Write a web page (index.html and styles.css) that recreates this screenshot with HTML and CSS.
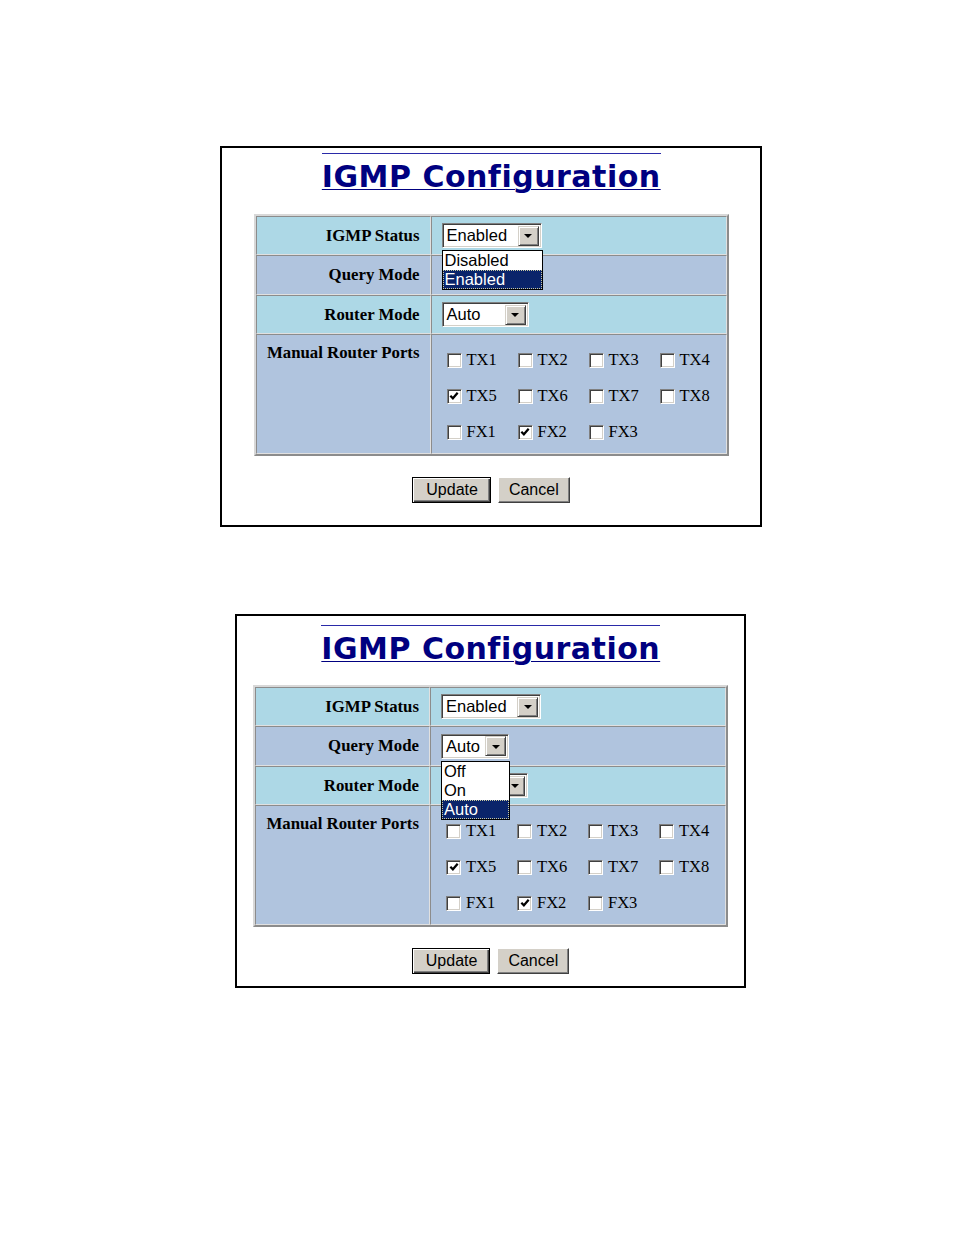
FILE: index.html
```html
<!DOCTYPE html>
<html>
<head>
<meta charset="utf-8">
<link rel="stylesheet" href="styles.css">
</head>
<body>
<div class="page">
  <section class="frame f1">
    <h1 class="title"><a>IGMP Configuration</a></h1>
    <div class="cfg">
      <div class="lab r1">IGMP Status</div>
      <div class="val r1">
        <div class="sel w100"><span class="txt">Enabled</span><span class="arr"><i></i></span>
          <div class="list w101"><div class="it">Disabled</div><div class="it on">Enabled</div></div>
        </div>
      </div>
      <div class="lab r2">Query Mode</div>
      <div class="val r2"></div>
      <div class="lab r3">Router Mode</div>
      <div class="val r3">
        <div class="sel w87"><span class="txt">Auto</span><span class="arr"><i></i></span></div>
      </div>
      <div class="lab r4 top">Manual Router Ports</div>
      <div class="val r4 ports">
        <div class="port"><span class="cb"></span>TX1</div>
        <div class="port"><span class="cb"></span>TX2</div>
        <div class="port"><span class="cb"></span>TX3</div>
        <div class="port"><span class="cb"></span>TX4</div>
        <div class="port"><span class="cb on"><svg viewBox="0 0 9 9"><path d="M1.2 4.2 L3.5 6.6 L7.8 1.6" /></svg></span>TX5</div>
        <div class="port"><span class="cb"></span>TX6</div>
        <div class="port"><span class="cb"></span>TX7</div>
        <div class="port"><span class="cb"></span>TX8</div>
        <div class="port"><span class="cb"></span>FX1</div>
        <div class="port"><span class="cb on"><svg viewBox="0 0 9 9"><path d="M1.2 4.2 L3.5 6.6 L7.8 1.6" /></svg></span>FX2</div>
        <div class="port"><span class="cb"></span>FX3</div>
      </div>
    </div>
    <div class="buttons"><span class="btn def">Update</span><span class="btn">Cancel</span></div>
  </section>

  <section class="frame f2">
    <h1 class="title"><a>IGMP Configuration</a></h1>
    <div class="cfg">
      <div class="lab r1">IGMP Status</div>
      <div class="val r1">
        <div class="sel w100"><span class="txt">Enabled</span><span class="arr"><i></i></span></div>
      </div>
      <div class="lab r2">Query Mode</div>
      <div class="val r2">
        <div class="sel w68"><span class="txt">Auto</span><span class="arr"><i></i></span>
          <div class="list w69"><div class="it">Off</div><div class="it">On</div><div class="it on">Auto</div></div>
        </div>
      </div>
      <div class="lab r3">Router Mode</div>
      <div class="val r3">
        <div class="sel w87"><span class="txt">Auto</span><span class="arr"><i></i></span></div>
      </div>
      <div class="lab r4 top">Manual Router Ports</div>
      <div class="val r4 ports">
        <div class="port"><span class="cb"></span>TX1</div>
        <div class="port"><span class="cb"></span>TX2</div>
        <div class="port"><span class="cb"></span>TX3</div>
        <div class="port"><span class="cb"></span>TX4</div>
        <div class="port"><span class="cb on"><svg viewBox="0 0 9 9"><path d="M1.2 4.2 L3.5 6.6 L7.8 1.6" /></svg></span>TX5</div>
        <div class="port"><span class="cb"></span>TX6</div>
        <div class="port"><span class="cb"></span>TX7</div>
        <div class="port"><span class="cb"></span>TX8</div>
        <div class="port"><span class="cb"></span>FX1</div>
        <div class="port"><span class="cb on"><svg viewBox="0 0 9 9"><path d="M1.2 4.2 L3.5 6.6 L7.8 1.6" /></svg></span>FX2</div>
        <div class="port"><span class="cb"></span>FX3</div>
      </div>
    </div>
    <div class="buttons"><span class="btn def">Update</span><span class="btn">Cancel</span></div>
  </section>
</div>
</body>
</html>
```

FILE: styles.css
```css
html, body {
  margin: 0;
  padding: 0;
  background: #fff;
}
.page {
  padding-top: 146px;
  width: 954px;
  height: 1235px;
  box-sizing: border-box;
}
.frame {
  box-sizing: border-box;
  border: 2px solid #000;
  display: flex;
  flex-direction: column;
  align-items: center;
}
.f1 {
  margin-left: 220px;
  width: 542px;
  height: 381px;
  padding-top: 5px;
}
.f2 {
  margin-top: 87px;
  margin-left: 235px;
  width: 511px;
  height: 374px;
  padding-top: 9px;
}
.title {
  margin: 0;
  display: flex;
  font-family: "DejaVu Sans", Verdana, sans-serif;
  font-weight: bold;
  font-size: 30px;
  line-height: 30px;
  letter-spacing: 0.5px;
  color: #000080;
}
.title a {
  display: block;
  border-top: 1px solid #2a2aa8;
  padding-top: 8px;
  height: 29px;
  text-decoration: underline;
  text-decoration-thickness: 1px;
  text-underline-offset: 2px;
  color: #000080;
  margin-right: -0.5px;
}
.cfg {
  margin-top: 23px;
  box-sizing: border-box;
  width: 475px;
  display: grid;
  grid-template-columns: 175px 296px;
  grid-template-rows: 39px 40px 39px 120px;
  border: 2px solid;
  border-color: #d8d8d8 #8c8c8c #8c8c8c #d8d8d8;
}
.f2 .cfg {
  margin-top: 22px;
}
.lab, .val {
  box-sizing: border-box;
  border: 1px solid;
  border-color: #8c8c8c #e0e0e0 #e0e0e0 #8c8c8c;
  font-family: "Liberation Serif", "Times New Roman", serif;
  font-size: 16.5px;
  color: #000;
}
.lab {
  font-weight: bold;
  font-size: 16.8px;
  display: flex;
  align-items: center;
  justify-content: flex-end;
  padding-right: 10px;
}
.lab.top {
  align-items: flex-start;
  padding-top: 8px;
}
.val {
  display: flex;
  align-items: center;
  padding-left: 10px;
}
.r1, .r3 { background: #add8e6; }
.r2, .r4 { background: #b0c4de; }

.sel {
  position: relative;
  box-sizing: border-box;
  height: 25px;
  display: flex;
  align-items: center;
  background: #fff;
  border: 1px solid;
  border-color: #808080 #fff #fff #808080;
  box-shadow: inset 1px 1px 0 #404040, inset -1px -1px 0 #d4d0c8;
  padding: 1px 2px 1px 1px;
}
.w100 { width: 100px; }
.w87 { width: 87px; }
.w68 { width: 68px; }
.sel .txt {
  flex: 1;
  font-family: "Liberation Sans", Arial, sans-serif;
  font-size: 16.5px;
  line-height: 21px;
  padding-left: 3px;
  color: #000;
}
.sel .arr {
  box-sizing: border-box;
  width: 21px;
  height: 20px;
  background: #d4d0c8;
  border: 1px solid;
  border-color: #d4d0c8 #404040 #404040 #d4d0c8;
  box-shadow: inset 1px 1px 0 #fff, inset -1px -1px 0 #808080;
  display: flex;
  align-items: center;
  justify-content: center;
}
.sel .arr i {
  width: 0;
  height: 0;
  border-left: 4px solid transparent;
  border-right: 4px solid transparent;
  border-top: 4px solid #000;
  margin-top: 1px;
}
.list {
  position: absolute;
  left: -1px;
  top: calc(100% + 3px);
  box-sizing: border-box;
  background: #fff;
  border: 1px solid #000;
  z-index: 5;
}
.w101 { width: 101px; }
.w69 { width: 69px; }
.it {
  font-family: "Liberation Sans", Arial, sans-serif;
  font-size: 16.5px;
  line-height: 19px;
  height: 19px;
  padding-left: 2px;
  color: #000;
}
.it.on {
  background: #0a246a;
  color: #fff;
  outline: 1px dotted #c8c8a0;
  outline-offset: -1px;
}

.ports {
  display: grid;
  grid-template-columns: repeat(4, 71px);
  grid-auto-rows: 36px;
  align-content: start;
  align-items: center;
  padding-left: 15px;
  padding-top: 7px;
}
.port {
  display: flex;
  align-items: center;
  gap: 5px;
  line-height: 18px;
}
.cb {
  box-sizing: border-box;
  width: 15px;
  height: 15px;
  background: #fff;
  border: 1px solid;
  border-color: #808080 #fff #fff #808080;
  box-shadow: inset 1px 1px 0 #404040, inset -1px -1px 0 #d4d0c8;
  display: flex;
  align-items: center;
  justify-content: center;
}
.cb svg {
  width: 10px;
  height: 10px;
  fill: none;
  stroke: #000;
  stroke-width: 2;
}

.buttons {
  margin-top: 21px;
  display: flex;
  gap: 7px;
}
.btn {
  box-sizing: border-box;
  height: 26px;
  padding: 0 10px;
  display: flex;
  align-items: center;
  font-family: "Liberation Sans", Arial, sans-serif;
  font-size: 16px;
  color: #000;
  background: #d4d0c8;
  border: 1px solid;
  border-color: #fff #404040 #404040 #fff;
  box-shadow: inset -1px -1px 0 #808080;
}
.btn.def {
  padding: 0 12px 0 13px;
  border: 1px solid #000;
  box-shadow: inset 1px 1px 0 #fff, inset -1px -1px 0 #404040, inset -2px -2px 0 #808080;
}
```
